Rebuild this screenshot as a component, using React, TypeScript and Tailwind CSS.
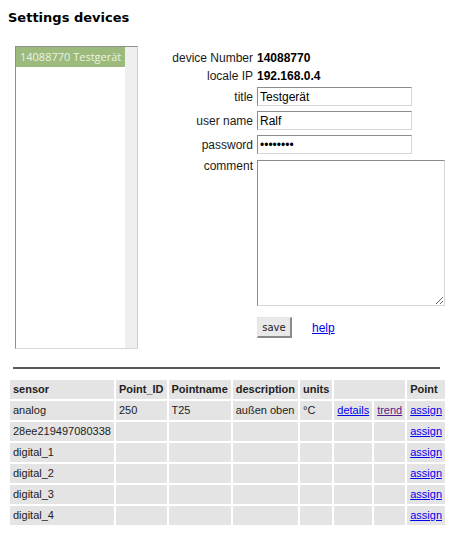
import React from 'react'

const rows = [
  { sensor: 'analog', id: '250', name: 'T25', desc: 'außen oben', units: '°C', links: true },
  { sensor: '28ee219497080338' },
  { sensor: 'digital_1' },
  { sensor: 'digital_2' },
  { sensor: 'digital_3' },
  { sensor: 'digital_4' },
]

function Field({ label, children }: { label: string; children: React.ReactNode }) {
  return (
    <div className="flex items-center h-[19px]">
      <span className="w-[93px] text-right shrink-0">{label}</span>
      <div className="ml-[4px]">{children}</div>
    </div>
  )
}

const inputCls =
  'w-[155px] h-[19px] px-[2px] text-[12px] text-black bg-white border border-t-[#8c8c8c] border-l-[#8c8c8c] border-r-[#d6d6d6] border-b-[#d6d6d6] outline-none'

export default function App() {
  return (
    <div className="pt-[10px] px-[8px] pb-[10px] bg-white text-[#1a1a1a] font-['Liberation_Sans',Arial,sans-serif]">
      <h1 className="text-[13px] leading-[15px] font-bold text-black font-['DejaVu_Sans',Verdana,sans-serif]">
        Settings devices
      </h1>

      <div className="flex items-start mt-[21px]">
        {/* device list */}
        <div className="ml-[7px] w-[123px] h-[303px] flex bg-white border border-t-[#8e8e8e] border-l-[#8e8e8e] border-r-[#cfcfcf] border-b-[#d8d8d8]">
          <div className="flex-1 min-w-0">
            <div className="h-[20px] pl-[4px] bg-[#9cba7c] text-[#eaf3e4] text-[11px] leading-[20px] font-['Open_Sans',sans-serif] whitespace-nowrap overflow-hidden">
              14088770 Testgerät
            </div>
          </div>
          <div className="w-[12px] shrink-0 bg-[#efefef]" />
        </div>

        {/* form */}
        <div className="ml-[22px] mt-[3px] text-[12px]">
          <div className="flex h-[18px] items-center">
            <span className="w-[93px] text-right">device Number</span>
            <b className="ml-[4px] text-black">14088770</b>
          </div>
          <div className="flex h-[18px] items-center">
            <span className="w-[93px] text-right">locale IP</span>
            <b className="ml-[4px] text-black">192.168.0.4</b>
          </div>
          <div className="mt-[2px] flex flex-col gap-[5px]">
            <Field label="title">
              <input className={inputCls} defaultValue="Testgerät" readOnly />
            </Field>
            <Field label="user name">
              <input className={inputCls} defaultValue="Ralf" readOnly />
            </Field>
            <Field label="password">
              <input type="password" className={inputCls} defaultValue="geheim12" readOnly />
            </Field>
          </div>
          <div className="flex items-start mt-[6px]">
            <span className="w-[93px] text-right leading-[12px]">comment</span>
            <textarea
              readOnly
              className="ml-[4px] w-[188px] h-[146px] bg-white border border-t-[#8c8c8c] border-l-[#8c8c8c] border-r-[#d6d6d6] border-b-[#d6d6d6] outline-none resize"
            />
          </div>
          <div className="flex items-center mt-[11px] ml-[97px]">
            <button className="w-[35px] h-[21px] bg-[#e9e9e9] text-[10px] text-[#222] font-['DejaVu_Sans',sans-serif] border-t border-l border-t-[#e4e4e4] border-l-[#e4e4e4] border-r-2 border-b-2 border-r-[#8a8a8a] border-b-[#8a8a8a]">
              save
            </button>
            <a href="#" className="ml-[20px] text-[#0000ee] underline">
              help
            </a>
          </div>
        </div>
      </div>

      <div className="mt-[18px] ml-[5px] w-[427px] h-[2px] bg-[#5a5a5a]" />

      <table className="mt-[9px] border-separate border-spacing-[2px] text-[11px] leading-[13px] text-[#222]">
        <thead>
          <tr className="bg-[#e4e4e4] text-left">
            <th className="px-[3px] py-[3px]">sensor</th>
            <th className="px-[3px] py-[3px]">Point_ID</th>
            <th className="px-[3px] py-[3px]">Pointname</th>
            <th className="px-[3px] py-[3px]">description</th>
            <th className="px-[3px] py-[3px]">units</th>
            <th className="px-[3px] py-[3px]" colSpan={2}></th>
            <th className="px-[3px] py-[3px]">Point</th>
          </tr>
        </thead>
        <tbody>
          {rows.map((r) => (
            <tr key={r.sensor} className="bg-[#e4e4e4]">
              <td className="px-[3px] py-[3px]">{r.sensor}</td>
              <td className="px-[3px] py-[3px]">{r.id}</td>
              <td className="px-[3px] py-[3px]">{r.name}</td>
              <td className="px-[3px] py-[3px]">{r.desc}</td>
              <td className="px-[3px] py-[3px]">{r.units}</td>
              <td className="px-[3px] py-[3px]">
                {r.links && <a href="#" className="text-[#0000ee] underline">details</a>}
              </td>
              <td className="px-[3px] py-[3px]">
                {r.links && <a href="#" className="text-[#551a8b] underline">trend</a>}
              </td>
              <td className="px-[3px] py-[3px]">
                <a href="#" className="text-[#0000ee] underline">assign</a>
              </td>
            </tr>
          ))}
        </tbody>
      </table>
    </div>
  )
}
